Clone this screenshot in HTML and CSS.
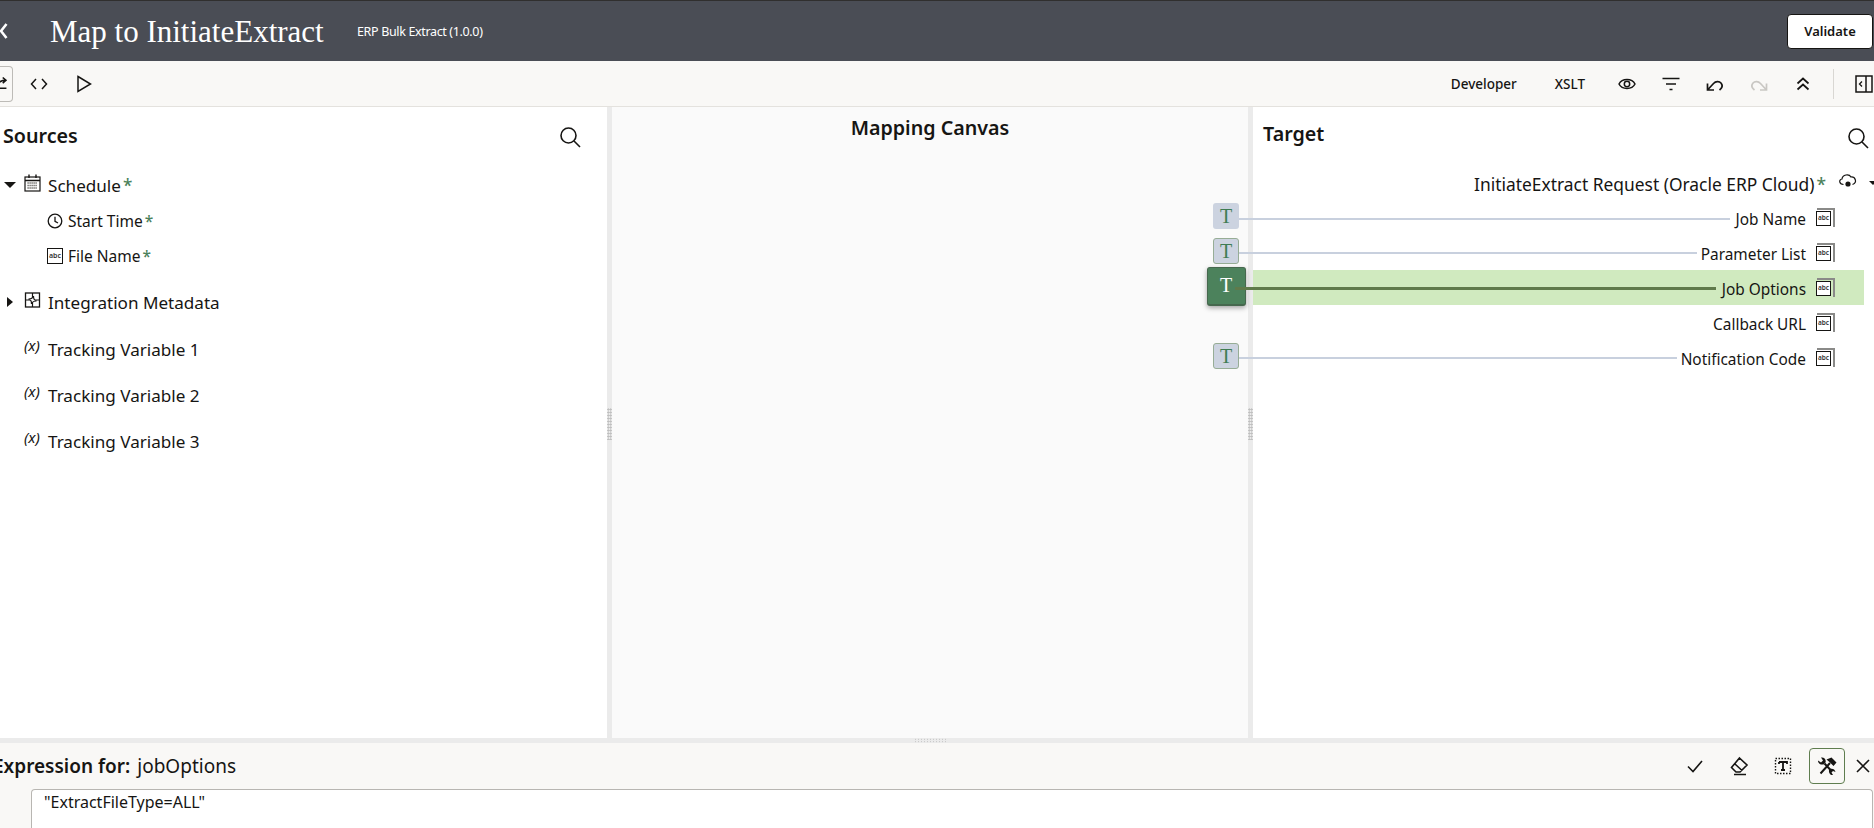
FILE: index.html
```html
<!DOCTYPE html>
<html lang="en">
<head>
<meta charset="utf-8">
<title>Map to InitiateExtract</title>
<link rel="stylesheet" href="styles.css">
</head>
<body>
<div class="app">
  <header class="header">
    <svg class="back" width="12" height="20" viewBox="0 0 12 20"><path d="M8.500 3 L3 10 L8.500 17" fill="none" stroke="#fff" stroke-width="2.600"/></svg>
    <h1 class="title">Map to InitiateExtract</h1>
    <span class="subtitle">ERP Bulk Extract (1.0.0)</span>
    <button class="validate">Validate</button>
  </header>

  <div class="toolbar">
    <div class="tb-left">
      <span class="tb-clipped"><svg width="14" height="16" viewBox="0 0 14 16"><path d="M-2 9 C0 5 3 4 7 4 M4 1 L7.500 4 L4 7 M-2 12.500 H8" fill="none" stroke="#161513" stroke-width="1.700"/></svg></span>
      <svg class="tb-icon" width="18" height="14" viewBox="0 0 18 14"><path d="M6 2 L1.500 7 L6 12 M12 2 L16.500 7 L12 12" fill="none" stroke="#161513" stroke-width="1.500"/></svg>
      <svg class="tb-icon" width="18" height="20" viewBox="0 0 18 20"><path d="M3 2.500 L15.500 10 L3 17.500 Z" fill="none" stroke="#161513" stroke-width="1.500"/></svg>
    </div>
    <div class="tb-right">
      <span class="tb-text tb-dev">Developer</span>
      <span class="tb-text tb-xslt">XSLT</span>
      <svg class="tb-act" width="20" height="20" viewBox="0 0 20 20"><path d="M2 10 C5 4 15 4 18 10 C15 16 5 16 2 10 Z" fill="none" stroke="#161513" stroke-width="1.500"/><circle cx="10" cy="10" r="2.700" fill="none" stroke="#161513" stroke-width="1.500"/></svg>
      <svg class="tb-act" width="20" height="20" viewBox="0 0 20 20"><path d="M1.500 4.500 H18.500 M5 10 H15 M8.500 15.500 H11.500" fill="none" stroke="#161513" stroke-width="1.600"/></svg>
      <svg class="tb-act" width="20" height="20" viewBox="0 0 20 20"><path d="M2.500 9.500 V16 H9 M2.500 16 L8.500 9.500 C10.500 7.500 14 6.800 16.200 9.300 C18 11.800 16.500 14.500 14.500 16" fill="none" stroke="#161513" stroke-width="1.700"/></svg>
      <svg class="tb-act" width="20" height="20" viewBox="0 0 20 20"><path d="M17.500 9.500 V16 H11 M17.500 16 L11.500 9.500 C9.500 7.500 6 6.800 3.800 9.300 C2 11.800 3.500 14.500 5.500 16" fill="none" stroke="#c9c7c3" stroke-width="1.700"/></svg>
      <svg class="tb-act" width="20" height="20" viewBox="0 0 20 20"><path d="M4.500 9.500 L10 4.500 L15.500 9.500 M4.500 15.500 L10 10.500 L15.500 15.500" fill="none" stroke="#161513" stroke-width="1.700"/></svg>
      <span class="tb-divider"></span>
      <svg class="tb-panel" width="18" height="18" viewBox="0 0 18 18"><rect x="1" y="1" width="16" height="16" fill="none" stroke="#161513" stroke-width="1.500"/><path d="M11 1 V17" stroke="#161513" stroke-width="1.500"/><path d="M7 6.500 L4.500 9 L7 11.500" fill="none" stroke="#161513" stroke-width="1.300"/></svg>
    </div>
  </div>

  <main class="panels">
    <section class="sources">
      <div class="panel-head">
        <h2 class="panel-title">Sources</h2>
        <svg class="search" width="22" height="22" viewBox="0 0 22 22"><circle cx="9.500" cy="9.500" r="7.500" fill="none" stroke="#161513" stroke-width="1.600"/><path d="M15 15 L21 21" stroke="#161513" stroke-width="1.600"/></svg>
      </div>
      <div class="tree">
        <div class="row row-top">
          <span class="caret caret-down"></span>
          <svg class="ticon" width="17" height="18" viewBox="0 0 17 18"><rect x="1" y="3" width="15" height="14" fill="none" stroke="#161513" stroke-width="1.200"/><path d="M1 6.500 H16 M5 0.500 V4 M12 0.500 V4" stroke="#161513" stroke-width="1.400"/><path d="M3.500 9 H13.500 M3.500 11.500 H13.500 M3.500 14 H13.500" stroke="#55534f" stroke-width="1.300" stroke-dasharray="1.200 .8"/></svg>
          <span class="label">Schedule<em class="req">*</em></span>
        </div>
        <div class="row row-child">
          <svg class="cicon" width="16" height="16" viewBox="0 0 16 16"><circle cx="8" cy="8" r="6.800" fill="none" stroke="#161513" stroke-width="1.300"/><path d="M8 3.800 V8.300 L11 10" fill="none" stroke="#161513" stroke-width="1.300"/></svg>
          <span class="label-sm">Start Time<em class="req">*</em></span>
        </div>
        <div class="row row-child">
          <span class="abc-plain">abc</span>
          <span class="label-sm">File Name<em class="req">*</em></span>
        </div>
        <div class="row row-var row-meta">
          <span class="caret caret-right"></span>
          <svg class="ticon" width="16" height="16" viewBox="0 0 16 16"><rect x="1" y="1" width="14" height="14" fill="none" stroke="#161513" stroke-width="1.300"/><path d="M8 1 V5 C8 6.500 6.500 7 4 7 M15 8 H11 C9.500 8 9 6.500 9 4 M8 15 V11 C8 9.500 9.500 9 12 9 M1 8 H5 C6.500 8 7 9.500 7 12" fill="none" stroke="#161513" stroke-width="1.200"/></svg>
          <span class="label">Integration Metadata</span>
        </div>
        <div class="row row-var row-track"><span class="caret"></span><span class="vicon">(x)</span><span class="label">Tracking Variable 1</span></div>
        <div class="row row-var row-track"><span class="caret"></span><span class="vicon">(x)</span><span class="label">Tracking Variable 2</span></div>
        <div class="row row-var row-track"><span class="caret"></span><span class="vicon">(x)</span><span class="label">Tracking Variable 3</span></div>
      </div>
    </section>

    <div class="splitter"><span class="grip-v"></span></div>

    <section class="canvas">
      <h2 class="canvas-title">Mapping Canvas</h2>
    </section>

    <div class="splitter"><span class="grip-v"></span></div>

    <section class="target">
      <div class="target-head">
        <h2 class="panel-title">Target</h2>
        <svg class="search" width="22" height="22" viewBox="0 0 22 22"><circle cx="9.500" cy="9.500" r="7.500" fill="none" stroke="#161513" stroke-width="1.600"/><path d="M15 15 L21 21" stroke="#161513" stroke-width="1.600"/></svg>
      </div>
      <div class="target-root">
        <span class="root-label">InitiateExtract Request (Oracle ERP Cloud)<em class="req">*</em></span>
        <svg class="cloud" width="20" height="16" viewBox="0 0 20 16"><path d="M5.500 11.500 C1 11.500 0.500 6.500 4 6 C4.500 1.500 11 0.500 13 4 C17 3.500 20 9.500 14.500 11.500" fill="none" stroke="#161513" stroke-width="1.200"/><circle cx="10" cy="11" r="2.600" fill="#161513"/></svg>
        <span class="caret caret-down caret-small"></span>
      </div>
      <div class="t-row"><span class="t-label">Job Name</span><span class="abc"><span class="abc-in">abc</span></span></div>
      <div class="t-row"><span class="t-label">Parameter List</span><span class="abc"><span class="abc-in">abc</span></span></div>
      <div class="t-row t-row-active"><span class="t-label">Job Options</span><span class="abc"><span class="abc-in">abc</span></span></div>
      <div class="t-row"><span class="t-label">Callback URL</span><span class="abc"><span class="abc-in">abc</span></span></div>
      <div class="t-row"><span class="t-label">Notification Code</span><span class="abc"><span class="abc-in">abc</span></span></div>
    </section>

    <div class="wire w1"></div>
    <div class="wire w2"></div>
    <div class="wire w4"></div>
    <div class="node n1">T</div>
    <div class="node node-linked n2">T</div>
    <div class="node-active n3">T</div>
    <div class="node node-linked n4">T</div>
    <div class="wire w3"></div>
  </main>

  <div class="hsplit"><span class="grip-h"></span></div>

  <section class="expr">
    <div class="expr-head">
      <span class="expr-label">Expression for:</span>
      <span class="expr-name">jobOptions</span>
      <div class="expr-actions">
        <svg class="ea" width="20" height="20" viewBox="0 0 20 20"><path d="M3 10.500 L8 15.500 L17 5" fill="none" stroke="#161513" stroke-width="1.600"/></svg>
        <svg class="ea" width="20" height="20" viewBox="0 0 20 20"><path d="M10.500 2 L18 9 L11 16 H7 L2.500 11.500 Z M6 8 L13 14.500 M5 18.500 H17" fill="none" stroke="#161513" stroke-width="1.600"/></svg>
        <svg class="ea" width="20" height="20" viewBox="0 0 20 20"><rect x="2.500" y="2.500" width="15" height="15" fill="none" stroke="#161513" stroke-width="1.400" stroke-dasharray="1.500 1.500"/><path d="M6 6 H14 V8 M6 8 V6 M10 6 V14 M8 14 H12" fill="none" stroke="#161513" stroke-width="1.800"/></svg>
        <span class="tool-btn"><svg width="22" height="22" viewBox="0 0 22 22"><path d="M4.500 18.500 L14 8 M8.500 8.500 L15.500 16" fill="none" stroke="#161513" stroke-width="2"/><path d="M10.500 4.500 L15.500 2.500 L20.500 7.500 L17.500 11 L14 7.500 Z" fill="#161513"/><path d="M2 5.500 L5 7.500 L7 5.500 L5 2.500 C8 1.800 10.500 4.500 9.500 7.500 L7.500 9.500 C4.500 10 2 8.500 2 5.500 Z" fill="#161513"/><path d="M14 14 C16 13 19 14 19.500 17 L17 16 L15.500 17.500 L17 20 C14.500 20.500 12.500 18 13 15 Z" fill="#161513"/></svg></span>
        <svg class="ea-x" width="16" height="16" viewBox="0 0 16 16"><path d="M2 2 L14 14 M14 2 L2 14" stroke="#161513" stroke-width="1.600"/></svg>
      </div>
    </div>
    <div class="editor"><span class="code">"ExtractFileType=ALL"</span></div>
  </section>
</div>
</body>
</html>
```
FILE: styles.css
```css
* { box-sizing: border-box; }
html, body { margin: 0; padding: 0; background: #fff; }
body { font-family: "Noto Sans", "Open Sans", sans-serif; color: #161513; overflow: hidden; }
.app { width: 1874px; height: 828px; display: flex; flex-direction: column; overflow: hidden; }
em { font-style: normal; }

.header { height: 61px; flex: none; display: flex; align-items: center; background: #4a4d55; border-top: 1px solid #302f2e; color: #fff; padding-right: 1px; }
.back { margin-left: -2px; flex: none; }
.title { margin: 0 0 0 40px; font: 400 31px/1 "Liberation Serif", serif; white-space: nowrap; width: 307px; }
.subtitle { font-size: 12.500px; letter-spacing: -0.35px; }
.validate { margin-left: auto; width: 86px; height: 35px; background: #fff; border: 1px solid #161513; border-radius: 4px; font: 600 13px "Noto Sans", sans-serif; color: #161513; padding: 0; }

.toolbar { height: 46px; flex: none; display: flex; align-items: center; justify-content: space-between; background: #f9f8f6; border-bottom: 1px solid #e4e2de; }
.tb-left { display: flex; align-items: center; }
.tb-clipped { width: 14px; height: 36px; margin-left: -1px; border: 1px solid #bdbbb7; border-left: 0; border-radius: 0 4px 4px 0; display: flex; align-items: center; overflow: hidden; }
.tb-icon { margin-left: 17px; }
.tb-icon + .tb-icon { margin-left: 27px; }
.tb-right { display: flex; align-items: center; }
.tb-text { font-size: 13.500px; font-weight: 500; }
.tb-xslt { margin-left: 38px; }
.tb-act { margin-left: 24px; }
.tb-act:first-of-type { margin-left: 32px; }
.tb-divider { width: 1px; height: 30px; background: #d9d7d3; margin-left: 20px; }
.tb-panel { margin-left: 21px; margin-right: 1px; }

.panels { position: relative; flex: 1; min-height: 0; display: flex; }
.sources { width: 607px; flex: none; background: #fff; }
.panel-head { height: 60px; display: flex; align-items: center; justify-content: space-between; padding: 0 26px 1px 3px; }
.panel-head .panel-title { margin-top: -2px; }
.panel-title { margin: 0; font-size: 19.700px; font-weight: 600; line-height: 1; }
.search { flex: none; margin-top: 1px; }
.tree { display: flex; flex-direction: column; }
.row { display: flex; align-items: center; }
.row-top { height: 36px; }
.row-child { height: 35px; padding-left: 47px; }
.row-var { height: 46px; }
.row-meta { margin-top: 6px; }
.caret { display: block; flex: none; width: 24px; }
.caret-down::before { content: ""; display: block; width: 0; height: 0; margin-left: 4px; border: 6px solid transparent; border-top: 6px solid #161513; border-bottom: 0; }
.caret-right::before { content: ""; display: block; width: 0; height: 0; margin-left: 7px; border: 5.500px solid transparent; border-left: 6px solid #161513; border-right: 0; }
.ticon { flex: none; width: 17px; margin-top: -4px; }
.vicon { flex: none; width: 17px; font-size: 15px; font-style: italic; margin-top: -6px; line-height: 1; }
.label { margin-left: 7px; font-size: 17.100px; white-space: nowrap; }
.row-top .label { margin-top: 1px; }
.row-track .label { margin-top: 2px; }
.cicon { flex: none; }
.abc-plain { flex: none; width: 16px; height: 16px; border: 1.300px solid #161513; font-size: 7px; line-height: 13px; text-align: center; font-weight: 600; color: #333; overflow: hidden; }
.label-sm { margin-left: 5px; font-size: 15.500px; white-space: nowrap; }
.req { color: #4c825c; font-weight: 500; margin-left: 2px; }

.splitter { width: 5px; flex: none; background: #ebebeb; position: relative; display: flex; align-items: center; justify-content: center; }
.grip-v { width: 5px; height: 32px; margin-top: 3px; background-image: radial-gradient(#bdbdbd 0.8px, transparent 1px); background-size: 2.500px 3px; }
.canvas { width: 636px; flex: none; background: #fafafa; text-align: center; }
.canvas-title { margin: 11px 0 0; font-size: 19.700px; font-weight: 600; line-height: 20px; }

.target { flex: 1; min-width: 0; background: #fff; padding-right: 10px; }
.target-head { height: 60px; display: flex; align-items: center; justify-content: space-between; padding: 0 0 0 10px; margin-right: -4px; }
.target-head .panel-title { margin-top: -7px; }
.target-head .search { margin-top: 2px; margin-right: -1px; }
.target-root { height: 33px; display: flex; align-items: center; justify-content: flex-end; margin-right: -14px; position: relative; }
.root-label { font-size: 17.400px; white-space: nowrap; margin-top: 1px; }
.cloud { flex: none; margin-left: 12px; margin-top: -6px; }
.caret-small { width: 12px; margin-left: 8px; margin-top: -2px; }
.caret-small::before { margin-left: 3px; border-width: 4px; border-top-width: 4px; }

.t-row { height: 35px; display: flex; align-items: center; justify-content: flex-end; padding-right: 29px; position: relative; }
.t-row-active { background: #d0eabf; }
.t-label { font-size: 15.400px; margin-top: 3px; white-space: nowrap; }
.abc { width: 18px; height: 19px; margin-left: 11px; margin-top: -1px; position: relative; border-top: 2px solid #8a8a88; border-right: 2px solid #8a8a88; display: block; flex: none; }
.abc-in { position: absolute; left: -1px; top: 1px; width: 15px; height: 15px; border: 1.500px solid #161513; background: #fff; font-size: 6.500px; line-height: 12px; text-align: center; font-weight: 600; color: #333; overflow: hidden; }

.wire { position: absolute; left: 1239px; height: 2px; background: #c8d0de; }
.w1 { top: 111px; width: 491px; }
.w2 { top: 145px; width: 458px; }
.w3 { top: 180px; left: 1235px; width: 481px; height: 3px; background: #5f7a4b; }
.w4 { top: 250px; width: 438px; }
.node { position: absolute; left: 1213px; width: 26px; height: 26px; background: #ccd3e0; border-radius: 3px; color: #3f7c53; font: 400 20px/26px "Liberation Serif", serif; text-align: center; }
.node-linked { border: 1px solid #97ad96; line-height: 25px; }
.n1 { top: 96px; }
.n2 { top: 131px; }
.n4 { top: 236px; }
.node-active { position: absolute; left: 1207px; top: 160px; width: 39px; height: 39px; background: #4c825c; border: 1px solid #46684e; border-bottom: 2px solid #46684e; border-radius: 3px; box-shadow: 0 2px 5px rgba(0,0,0,.35); color: #fff; font: 400 20px/34px "Liberation Serif", serif; padding-right: 1px; text-align: center; }

.hsplit { height: 5px; flex: none; background: #ebebeb; display: flex; justify-content: center; }
.grip-h { width: 32px; height: 5px; margin-right: 14px; background-image: radial-gradient(#bdbdbd 0.8px, transparent 1px); background-size: 3px 2.500px; }
.expr { height: 85px; flex: none; background: #f9f8f6; display: flex; flex-direction: column; }
.expr-head { height: 46px; flex: none; display: flex; align-items: center; }
.expr-label { margin-left: -7px; font-size: 19px; font-weight: 600; white-space: nowrap; }
.expr-name { margin-left: 7px; font-size: 19px; white-space: nowrap; }
.expr-actions { margin-left: auto; display: flex; align-items: center; }
.ea { margin-left: 24px; }
.tool-btn { width: 36px; height: 36px; margin-left: 16px; border: 1px solid #5f7d4f; border-radius: 4px; display: flex; align-items: center; justify-content: center; }
.ea-x { margin-left: 10px; margin-right: 3px; }
.editor { flex: 1; margin-left: 31px; margin-right: 1px; background: #fff; border: 1px solid #b8b6b2; border-bottom: 0; border-radius: 4px 4px 0 0; padding: 1px 0 0 12px; }
.code { font-size: 16px; line-height: 20px; white-space: nowrap; }
```
